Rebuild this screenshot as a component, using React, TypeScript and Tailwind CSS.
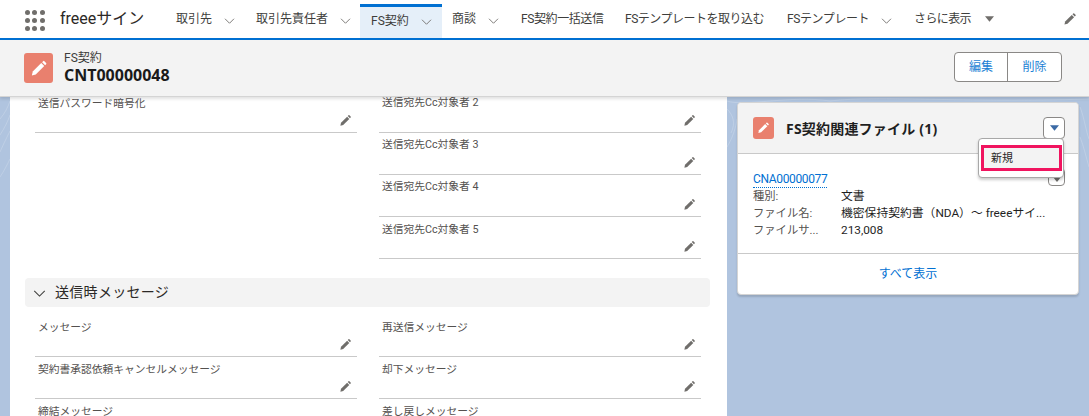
import React from "react";

const font = { fontFamily: 'Roboto, "Noto Sans CJK JP", sans-serif' };
const boldFont = { fontFamily: '"Open Sans", "Noto Sans CJK JP", sans-serif' };

const Pencil = ({ className }: { className: string }) => (
  <svg viewBox="0 0 24 24" className={className} fill="currentColor">
    <path d="M2.5 21.5l1.2-5.2L15 5l4 4L7.7 20.3z" />
    <path d="M16.2 3.8l1.3-1.3a1.2 1.2 0 0 1 1.7 0l2.3 2.3a1.2 1.2 0 0 1 0 1.7l-1.3 1.3z" />
  </svg>
);

const Chevron = ({ className }: { className: string }) => (
  <svg viewBox="0 0 14 8" className={className} fill="none" stroke="currentColor" strokeWidth="1.2">
    <path d="M1 1l6 6 6-6" />
  </svg>
);

const Caret = ({ className }: { className: string }) => (
  <svg viewBox="0 0 10 6" className={className} fill="currentColor">
    <path d="M0 0h10L5 6z" />
  </svg>
);

const GridDots = () => (
  <div className="grid grid-cols-3 gap-[3px] w-[19px] h-[19px] mr-[16px]">
    {Array.from({ length: 9 }).map((_, i) => (
      <span key={i} className="w-[5px] h-[5px] rounded-full bg-[#706e6b]" />
    ))}
  </div>
);

const navItems = [
  { label: "取引先", menu: true, w: "w-[80px] pl-[12px]" },
  { label: "取引先責任者", menu: true, w: "w-[116px] pl-[12px]" },
  { label: "FS契約", menu: true, w: "w-[82px] pl-[11px]", active: true },
  { label: "商談", menu: true, w: "w-[67px] pl-[10px]" },
  { label: "FS契約一括送信", menu: false, w: "w-[104px] pl-[12px] tracking-[-0.4px]" },
  { label: "FSテンプレートを取り込む", menu: false, w: "w-[162px] pl-[12px] tracking-[-0.5px]" },
  { label: "FSテンプレート", menu: true, w: "w-[139px] pl-[12px] tracking-[-0.4px]" },
];

const Nav = () => (
  <div className="h-[40px] bg-white border-b-[2px] border-[#0070d2] flex items-center pl-[25px] relative z-20">
    <GridDots />
    <div className="text-[16px] text-[#2b2826] w-[104px] shrink-0">freeeサイン</div>
    {navItems.map((item) => (
      <div
        key={item.label}
        className={`${item.w} shrink-0 flex items-center text-[12px] text-[#3e3e3c] ${
          item.active ? "bg-[#e5eff9] border-t-[3px] border-[#0070d2] h-[34px] self-end pb-[3px]" : "h-[38px]"
        }`}
      >
        <span className="whitespace-nowrap">{item.label}</span>
        {item.menu && (
          <Chevron className={`w-[11px] h-[6px] ml-[12px] text-[#706e6b] shrink-0 ${item.active ? "mt-[1px]" : "mt-[3px]"}`} />
        )}
      </div>
    ))}
    <div className="flex items-center text-[12px] text-[#3e3e3c]">
      <span className="whitespace-nowrap tracking-[-0.6px]">さらに表示</span>
      <Caret className="w-[9px] h-[6px] ml-[14px] text-[#706e6b]" />
    </div>
    <div className="flex-1" />
    <Pencil className="w-[14px] h-[14px] text-[#706e6b] mr-[12px]" />
  </div>
);

const ObjectIcon = ({ className }: { className: string }) => (
  <div className={`${className} rounded-[3px] bg-[#e9806e] flex items-center justify-center text-white`}>
    <Pencil className="w-[62%] h-[62%]" />
  </div>
);

const Header = () => (
  <div className="h-[57px] bg-[#f3f3f3] border-b border-[#d4d4d4] shadow-[0_2px_3px_rgba(0,0,0,0.12)] flex items-center pl-[24px] pr-[27px] relative z-10">
    <ObjectIcon className="w-[29px] h-[30px] mr-[11px]" />
    <div className="flex-1 -mt-[1px]">
      <div className="text-[12px] leading-[16px] text-[#3e3e3c]">FS契約</div>
      <div className="text-[16px] leading-[19px] font-bold text-[#1a1a1a]" style={boldFont}>CNT00000048</div>
    </div>
    <div className="flex h-[30px] -mt-[3px] border border-[#8a8886] rounded-[4px] bg-white text-[12px] text-[#1b7fd4]">
      <div className="w-[53px] flex items-center justify-center border-r border-[#8a8886]">編集</div>
      <div className="w-[53px] flex items-center justify-center">削除</div>
    </div>
  </div>
);

const Field = ({ label, tight }: { label: string; tight?: boolean }) => (
  <div
    className={`h-[42px] border-b border-[#c9c9c9] relative pl-[3px] text-[10.75px] leading-[16px] text-[#54514f] ${
      tight ? "pt-[4px]" : "pt-[5px]"
    }`}
  >
    <div className="whitespace-nowrap">{label}</div>
    <Pencil className="absolute right-[5px] bottom-[5px] w-[13px] h-[13px] text-[#706e6b]" />
  </div>
);

const Detail = () => (
  <div className="ml-[10px] w-[717px] shrink-0 h-[340px] bg-white -mt-[7px] px-[15px] overflow-hidden">
    <div className="grid grid-cols-2 px-[10px] gap-x-[22px] w-[686px] pt-[1px]">
      <div>
        <Field label="送信パスワード暗号化" />
      </div>
      <div>
        <Field tight label="送信宛先Cc対象者 2" />
        <Field tight label="送信宛先Cc対象者 3" />
        <Field tight label="送信宛先Cc対象者 4" />
        <Field label="送信宛先Cc対象者 5" />
      </div>
    </div>
    <div className="mt-[19px] w-[685px] h-[29px] bg-[#f3f3f3] rounded-[4px] flex items-center pl-[8px] text-[14px] tracking-[0.3px] text-[#2b2826]">
      <Chevron className="w-[13px] h-[7px] mr-[9px] text-[#3e3e3c] mt-[1px]" />
      送信時メッセージ
    </div>
    <div className="grid grid-cols-2 px-[10px] gap-x-[22px] w-[686px] mt-[8px]">
      <Field label="メッセージ" />
      <Field label="再送信メッセージ" />
      <Field label="契約書承認依頼キャンセルメッセージ" />
      <Field label="却下メッセージ" />
      <Field label="締結メッセージ" />
      <Field label="差し戻しメッセージ" />
    </div>
  </div>
);

const Row = ({ k, v }: { k: string; v: string }) => (
  <div className="flex leading-[17px] h-[17px]">
    <div className="w-[88px] text-[11.3px] text-[#54514f] shrink-0">{k}</div>
    <div className="text-[11.8px] text-[#1f1f1f] whitespace-nowrap">{v}</div>
  </div>
);

const RelatedCard = () => (
  <div className="ml-[10px] mt-[5px] w-[342px] h-[193px] bg-white border border-[#d4d4d4] rounded-[4px] shadow-[0_2px_2px_rgba(0,0,0,0.15)] relative flex flex-col">
    <div className="h-[51px] bg-[#f3f3f3] border-b border-[#c9c9c9] rounded-t-[4px] flex items-center pl-[15px] shrink-0">
      <ObjectIcon className="w-[21px] h-[22px] mr-[12px]" />
      <div className="text-[14px] font-bold text-[#1f1f1f] mt-[1px] tracking-[0.2px]" style={boldFont}>FS契約関連ファイル (1)</div>
    </div>
    <div className="flex-1 pl-[15px] pt-[17px]">
      <div className="text-[12px] leading-[16px] tracking-[-0.35px] text-[#0070d2] border-b border-dotted border-[#0070d2] w-fit">CNA00000077</div>
      <Row k="種別:" v="文書" />
      <Row k="ファイル名:" v="機密保持契約書（NDA）～ freeeサイ..." />
      <Row k="ファイルサ..." v="213,008" />
    </div>
    <div className="h-[41px] border-t border-[#c9c9c9] flex items-center justify-center text-[12px] text-[#0070d2] shrink-0">
      すべて表示
    </div>

    {/* open dropdown over the card */}
    <div className="absolute left-[305px] top-[14px] w-[22px] h-[22px] bg-white border border-[#8a8886] rounded-[4px] flex items-center justify-center">
      <Caret className="w-[9px] h-[6px] text-[#3b6aa5]" />
    </div>
    <div className="absolute left-[310px] top-[65px] w-[17px] h-[18px] bg-white border border-[#8a8886] rounded-[4px] flex items-center justify-center">
      <Caret className="w-[8px] h-[5px] mt-[4px] text-[#706e6b]" />
    </div>
    <div className="absolute left-[240px] top-[35px] w-[86px] h-[40px] bg-white border border-[#a8a8a8] rounded-[4px] shadow-[0_2px_3px_rgba(0,0,0,0.2)] pl-[2px] pt-[6px]">
      <div className="h-[26px] w-[81px] border-[3px] border-[#f0145f] bg-[#f3f3f3] flex items-center pl-[7px] pt-[2px] text-[11px] text-[#2b2826]">
        新規
      </div>
    </div>
  </div>
);

// faint contour lines of the page background
const Contours = () => (
  <svg className="absolute left-0 top-[97px] w-[1089px] h-[120px]" viewBox="0 0 1089 120" fill="none" stroke="#ffffff" strokeOpacity="0.18">
    <path d="M0 22C5 16 8 10 10 4M0 38C5 30 8 24 10 18M0 55C4 46 7 40 10 34M0 80C4 74 7 68 10 62" />
    <path d="M727 12C733 18 736 26 731 36M727 50C733 40 736 30 737 22M727 4C745 10 790 -2 830 4C880 -2 960 6 1089 2" />
    <path d="M1080 10C1084 20 1086 34 1089 42M1080 40C1084 50 1086 60 1089 70" />
  </svg>
);

export default function App() {
  return (
    <div className="w-[1089px] h-[416px] overflow-hidden bg-[#b0c4df] relative" style={font}>
      <Contours />
      <Nav />
      <Header />
      <div className="flex items-start relative">
        <Detail />
        <RelatedCard />
      </div>
    </div>
  );
}
